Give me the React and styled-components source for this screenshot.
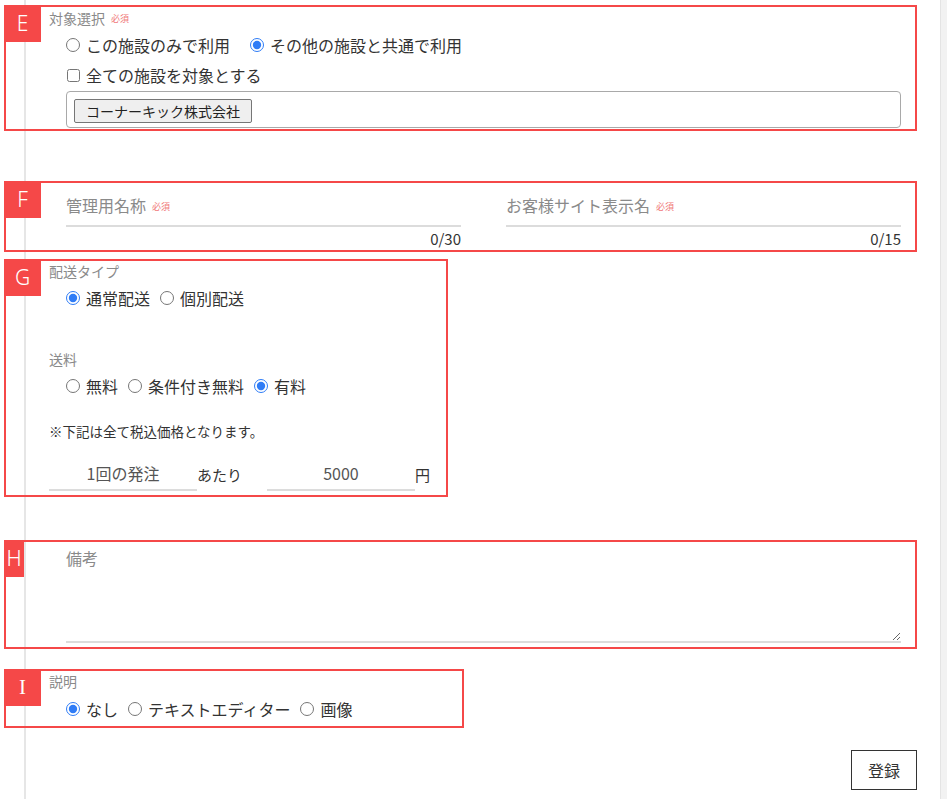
import React from 'react';
import styled, { createGlobalStyle } from 'styled-components';

const GlobalStyle = createGlobalStyle`
  html, body {
    margin: 0;
    padding: 0;
    background: #fff;
  }
  body {
    font-family: "Noto Sans CJK JP", "Noto Sans", sans-serif;
    color: #333;
  }
  * {
    box-sizing: border-box;
  }
`;

const RED = '#f54848';

const Page = styled.div`
  min-height: 100vh;
  padding: 5px 30px 8px 4px;
  background:
    linear-gradient(to right, transparent 24px, #e6e6e6 24px, #e6e6e6 26px, transparent 26px),
    linear-gradient(to right, transparent 940px, #e4e4e4 940px, #e4e4e4 941px, #f2f2f2 941px);
`;

const Section = styled.section`
  position: relative;
  width: ${(p) => p.$width || '100%'};
  margin-top: ${(p) => p.$mt || 0}px;
  padding: ${(p) => p.$pad || '0 14px 0 43px'};
  border: 2px solid ${RED};
`;

const Badge = styled.span`
  position: absolute;
  top: -2px;
  left: -2px;
  width: ${(p) => p.$w || 37}px;
  height: 37px;
  display: flex;
  align-items: center;
  justify-content: center;
  background: ${RED};
  color: #fff;
  font-family: ${(p) => (p.$serif ? '"Liberation Serif", serif' : '"Noto Sans", sans-serif')};
  font-size: 21px;
  font-weight: 300;
  line-height: 1;
`;

const Label = styled.div`
  height: 20px;
  line-height: 20px;
  font-size: 14px;
  color: #8a8a8a;
  margin-top: ${(p) => p.$mt || 0}px;
  white-space: nowrap;
`;

const Required = styled.span`
  font-size: 9px;
  color: #f07878;
  margin-left: 6px;
  vertical-align: middle;
  position: relative;
  top: -1px;
`;

const Options = styled.div`
  display: flex;
  align-items: center;
  height: 22px;
  margin: ${(p) => p.$mt || 0}px 0 0 17px;
  gap: ${(p) => p.$gap || 10}px;
`;

const Option = styled.label`
  display: inline-flex;
  align-items: center;
  gap: 6px;
  font-size: 16px;
  line-height: 22px;
  color: #333;
  white-space: nowrap;
`;

const Radio = styled.input.attrs({ type: 'radio' })`
  width: 14px;
  height: 14px;
  margin: 0;
  accent-color: #2f7cf6;
`;

const Check = styled.input.attrs({ type: 'checkbox' })`
  width: 13px;
  height: 13px;
  margin: 0 0 0 1px;
`;

const TagBox = styled.div`
  height: 37px;
  margin: 5px 0 1px 17px;
  padding: 6px 7px;
  border: 1px solid #a9a9a9;
  border-radius: 4px;
`;

const TagButton = styled.button`
  height: 24px;
  padding: 0 11px;
  font-family: "Noto Sans CJK JP", sans-serif;
  font-size: 14px;
  color: #222;
  background: #efefef;
  border: 1px solid #767676;
  border-radius: 2px;
`;

const Columns = styled.div`
  display: grid;
  grid-template-columns: 1fr 1fr;
  gap: 45px;
`;

const Field = styled.div`
  display: flex;
  flex-direction: column;
`;

const FieldLabel = styled.div`
  height: 24px;
  line-height: 24px;
  font-size: 16px;
  color: #8a8a8a;
  white-space: nowrap;
`;

const LineInput = styled.input`
  width: 100%;
  height: 10px;
  padding: 0;
  border: none;
  border-bottom: 2px solid #dcdcdc;
  outline: none;
  background: transparent;
`;

const Counter = styled.div`
  margin-top: 2px;
  height: 20px;
  line-height: 20px;
  font-size: 15px;
  color: #333;
  text-align: right;
`;

const Note = styled.div`
  height: 20px;
  line-height: 20px;
  margin-top: 24px;
  font-size: 13.5px;
  color: #333;
`;

const PriceRow = styled.div`
  display: flex;
  align-items: center;
  margin: 16px 0 4px;
`;

const PriceInput = styled.input`
  width: 148px;
  height: 34px;
  padding: 0;
  border: none;
  border-bottom: 2px solid #dcdcdc;
  outline: none;
  background: transparent;
  font-family: "Noto Sans CJK JP", sans-serif;
  font-size: 16px;
  color: #555;
  text-align: center;
`;

const Unit = styled.span`
  width: ${(p) => p.$w}px;
  font-size: 15px;
  color: #333;
  white-space: nowrap;
`;

const Memo = styled.textarea`
  display: block;
  width: 100%;
  height: 73px;
  padding: 0;
  border: none;
  border-bottom: 2px solid #dcdcdc;
  outline: none;
  resize: vertical;
  background: transparent;
`;

const Footer = styled.div`
  display: flex;
  justify-content: flex-end;
  margin-top: 22px;
`;

const SubmitButton = styled.button`
  width: 66px;
  height: 40px;
  background: #fff;
  border: 1px solid #333;
  font-family: "Noto Sans CJK JP", sans-serif;
  font-size: 16px;
  color: #333;
`;

const App = () => {
  return (
    <Page>
      <GlobalStyle />

      <Section>
        <Badge>E</Badge>
        <Label $mt={1}>
          対象選択<Required>必須</Required>
        </Label>
        <Options $mt={6} $gap={20}>
          <Option>
            <Radio name="target" />
            この施設のみで利用
          </Option>
          <Option>
            <Radio name="target" defaultChecked />
            その他の施設と共通で利用
          </Option>
        </Options>
        <Options $mt={8}>
          <Option>
            <Check />
            全ての施設を対象とする
          </Option>
        </Options>
        <TagBox>
          <TagButton>コーナーキック株式会社</TagButton>
        </TagBox>
      </Section>

      <Section $mt={50} $pad="10px 14px 1px 60px">
        <Badge>F</Badge>
        <Columns>
          <Field>
            <FieldLabel>
              管理用名称<Required>必須</Required>
            </FieldLabel>
            <LineInput />
            <Counter>0/30</Counter>
          </Field>
          <Field>
            <FieldLabel>
              お客様サイト表示名<Required>必須</Required>
            </FieldLabel>
            <LineInput />
            <Counter>0/15</Counter>
          </Field>
        </Columns>
      </Section>

      <Section $mt={7} $width="444px" $pad="0 14px 0 43px">
        <Badge>G</Badge>
        <Label>配送タイプ</Label>
        <Options $mt={6}>
          <Option>
            <Radio name="delivery" defaultChecked />
            通常配送
          </Option>
          <Option>
            <Radio name="delivery" />
            個別配送
          </Option>
        </Options>
        <Label $mt={40}>送料</Label>
        <Options $mt={6}>
          <Option>
            <Radio name="fee" />
            無料
          </Option>
          <Option>
            <Radio name="fee" />
            条件付き無料
          </Option>
          <Option>
            <Radio name="fee" defaultChecked />
            有料
          </Option>
        </Options>
        <Note>※下記は全て税込価格となります。</Note>
        <PriceRow>
          <PriceInput defaultValue="1回の発注" />
          <Unit $w={70}>あたり</Unit>
          <PriceInput defaultValue="5000" />
          <Unit $w={16}>円</Unit>
        </PriceRow>
      </Section>

      <Section $mt={43} $pad="4px 14px 4px 60px">
        <Badge $w={20}>H</Badge>
        <FieldLabel>備考</FieldLabel>
        <Memo />
      </Section>

      <Section $mt={20} $width="460px" $pad="0 14px 6px 43px">
        <Badge $serif>I</Badge>
        <Label>説明</Label>
        <Options $mt={7}>
          <Option>
            <Radio name="desc" defaultChecked />
            なし
          </Option>
          <Option>
            <Radio name="desc" />
            テキストエディター
          </Option>
          <Option>
            <Radio name="desc" />
            画像
          </Option>
        </Options>
      </Section>

      <Footer>
        <SubmitButton>登録</SubmitButton>
      </Footer>
    </Page>
  );
};

export default App;
